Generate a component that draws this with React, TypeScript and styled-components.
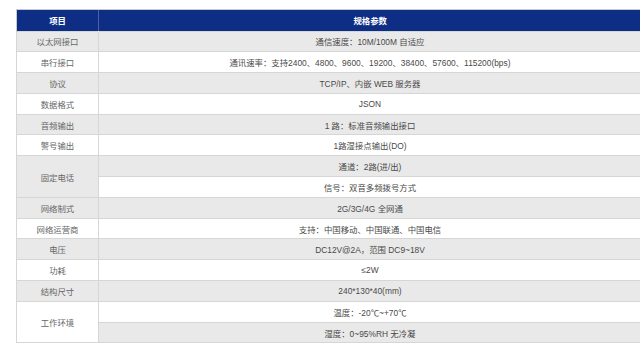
import { createGlobalStyle, styled } from 'styled-components';

const GlobalStyle = createGlobalStyle`
  html, body {
    margin: 0;
    padding: 0;
    background: #fff;
  }
  body {
    font-family: 'Liberation Sans', 'Noto Sans CJK SC', Arial, sans-serif;
  }
`;

const Page = styled.div`
  padding: 9px 0 0 16px;
  width: 640px;
  height: 353px;
  box-sizing: border-box;
  overflow: hidden;
`;

const SpecTable = styled.table`
  width: 626px;
  border-collapse: collapse;
  table-layout: fixed;
  font-size: 8.4px;
  color: #4a4a4a;

  tbody tr:nth-child(odd) td {
    background: #e9e9e9;
  }
`;

const HeadCell = styled.th`
  height: 20.5px;
  padding: 0;
  background: #0e2e86;
  color: #fff;
  font-weight: bold;
  text-align: center;
  border-top: 1px solid #c9c9c9;
  border-left: 1px solid rgba(255, 255, 255, 0.25);
  &:first-child {
    border-left: 1px solid #c9c9c9;
  }
`;

const Cell = styled.td<{ $label?: boolean }>`
  height: 19.8px;
  padding: 0;
  text-align: center;
  background: #fff;
  border: 1px solid #d6d6d6;
  color: ${(p) => (p.$label ? '#666' : '#4a4a4a')};
  white-space: nowrap;
`;

type Spec = { label: string; values: string[] };

const specs: Spec[] = [
  { label: '以太网接口', values: ['通信速度：10M/100M 自适应'] },
  { label: '串行接口', values: ['通讯速率：支持2400、4800、9600、19200、38400、57600、115200(bps)'] },
  { label: '协议', values: ['TCP/IP、内嵌 WEB 服务器'] },
  { label: '数据格式', values: ['JSON'] },
  { label: '音频输出', values: ['1 路：标准音频输出接口'] },
  { label: '警号输出', values: ['1路湿接点输出(DO)'] },
  { label: '固定电话', values: ['通道：2路(进/出)', '信号：双音多频拨号方式'] },
  { label: '网络制式', values: ['2G/3G/4G 全网通'] },
  { label: '网络运营商', values: ['支持：中国移动、中国联通、中国电信'] },
  { label: '电压', values: ['DC12V@2A，范围 DC9~18V'] },
  { label: '功耗', values: ['≤2W'] },
  { label: '结构尺寸', values: ['240*130*40(mm)'] },
  { label: '工作环境', values: ['温度：-20℃~+70℃', '湿度：0~95%RH 无冷凝'] },
];

export default function App() {
  return (
    <Page>
      <GlobalStyle />
      <SpecTable>
        <colgroup>
          <col style={{ width: 82 }} />
          <col />
        </colgroup>
        <thead>
          <tr>
            <HeadCell>项目</HeadCell>
            <HeadCell>规格参数</HeadCell>
          </tr>
        </thead>
        <tbody>
          {specs.flatMap((s) =>
            s.values.map((v, i) => (
              <tr key={s.label + i}>
                {i === 0 && (
                  <Cell $label rowSpan={s.values.length}>
                    {s.label}
                  </Cell>
                )}
                <Cell>{v}</Cell>
              </tr>
            ))
          )}
        </tbody>
      </SpecTable>
    </Page>
  );
}
